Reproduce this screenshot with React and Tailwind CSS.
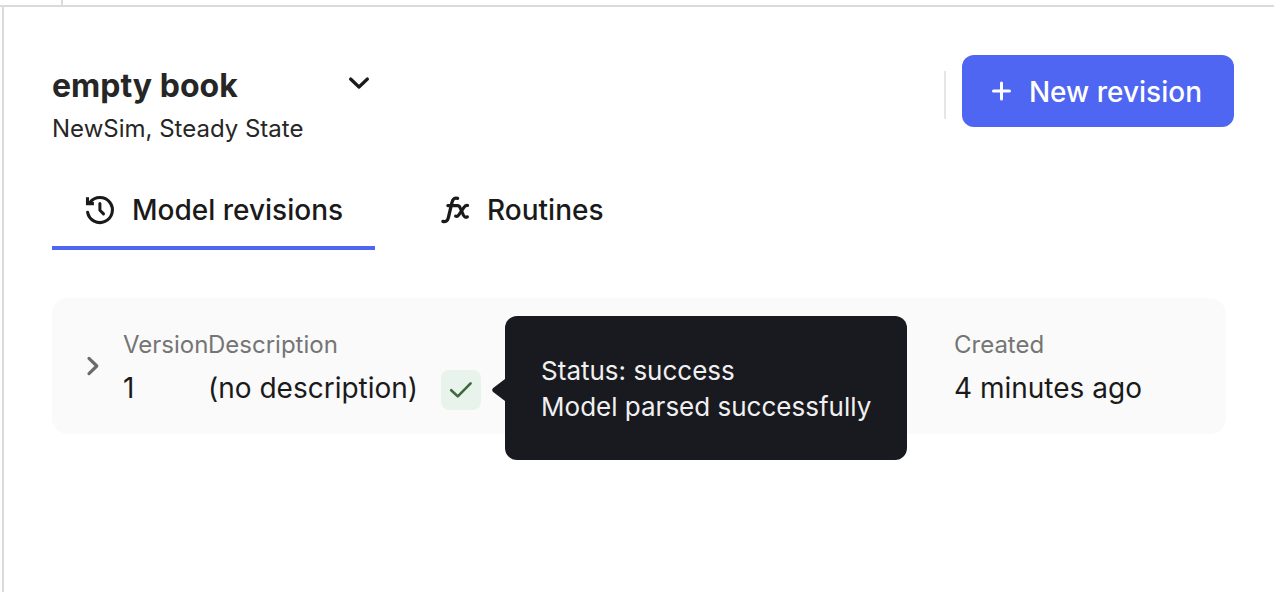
import React from "react";

const stroke = {
  fill: "none",
  stroke: "currentColor",
  strokeLinecap: "round",
  strokeLinejoin: "round",
  "aria-hidden": true,
};

function HistoryIcon() {
  return (
    <svg viewBox="0 0 32 32" className="size-8 shrink-0" {...stroke}>
      <path d="M3.6 18.2A12.5 12.5 0 1 0 6 8.4" strokeWidth="3.1" />
      <path d="M3.5 3.2V9.6H9.9" strokeWidth="3.1" strokeLinecap="butt" strokeLinejoin="miter" />
      <path d="M15.9 9.5V16.3L19.5 19.9" strokeWidth="3" />
    </svg>
  );
}

function FunctionIcon() {
  return (
    <svg viewBox="0 0 32 32" className="size-8 shrink-0" {...stroke}>
      <path d="M3.9 27.4C6.3 28.2 8.5 27 9.3 23.8L13 8.4C13.8 5 15.6 3.4 18.6 4.3" strokeWidth="3.3" />
      <path d="M8.8 11.6H18.4C20 11.6 20.6 12.3 21.2 13.8L24.4 21.2C25.2 22.9 26.6 23.7 28.4 22.8" strokeWidth="3.1" />
      <path d="M28.6 11.5C27 10.9 25.8 12 24.6 13.8L20 20.6C18.9 22.2 17.9 22.8 16.6 22.2" strokeWidth="3.1" />
    </svg>
  );
}

function Field({ label, className = "", children }) {
  return (
    <div className={`flex flex-col gap-0.5 ${className}`}>
      <dt className="text-[24px] leading-[38px] text-[#757575]">{label}</dt>
      <dd className="flex h-11 items-end text-[28px] leading-11 text-[#1a1a1a]">{children}</dd>
    </div>
  );
}

function StatusBadge() {
  return (
    <span className="relative ml-[23px] block size-10 shrink-0">
      <button
        type="button"
        aria-label="Status"
        aria-describedby="status-tip"
        className="flex size-10 items-center justify-center rounded-lg bg-[#e8f3eb] text-[#3b6a3c]"
      >
        <svg viewBox="0 0 40 40" className="size-10" {...stroke}>
          <path d="M10.2 20.2L16.8 26.4L29.6 13.4" strokeWidth="2.6" />
        </svg>
      </button>
      <span
        id="status-tip"
        role="tooltip"
        className="absolute -top-[54px] left-16 z-10 flex flex-col rounded-xl bg-[#191a1f] px-9 pt-[37px] pb-[35px] text-[26px] leading-9 whitespace-nowrap text-[#f0f0f0]"
      >
        <svg
          viewBox="0 0 14 24"
          className="absolute top-[62px] -left-[13px] h-6 w-3.5 text-[#191a1f]"
          aria-hidden="true"
        >
          <path d="M14 .2L1.2 10Q-.8 12 1.2 14L14 23.8Z" fill="currentColor" />
        </svg>
        <span>Status: success</span>
        <span>Model parsed successfully</span>
      </span>
    </span>
  );
}

export default function App() {
  return (
    <div className="flex min-h-screen flex-col bg-white font-['Inter',sans-serif] text-[#1a1a1a]">
      <div className="flex h-[7px] border-b-2 border-[#dadada]">
        <div className="w-[63px] border-r-2 border-[#dadada]" />
      </div>
      <main className="ml-0.5 flex grow flex-col border-l-2 border-[#dadada] pt-12 pr-10 pl-12">
        <header className="flex items-start justify-between">
          <div className="w-[323px] pt-3">
            <button type="button" className="flex w-full items-start justify-between text-left">
              <h1 className="text-[32px] leading-[38px] font-bold text-[#262626]">empty book</h1>
              <svg viewBox="0 0 32 32" className="size-8" {...stroke}>
                <path d="M7.6 12L16 20L24.4 12" strokeWidth="3.2" />
              </svg>
            </button>
            <p className="text-[24px] leading-12 text-[#262626]">NewSim, Steady State</p>
          </div>
          <div className="flex items-start gap-4">
            <div className="mt-4 h-12 w-0.5 bg-[#e6e6e6]" />
            <button
              type="button"
              className="flex h-18 items-center gap-3 rounded-xl bg-[#4f66f2] pr-8 pl-[23px] text-[28px] leading-10 font-medium whitespace-nowrap text-white"
            >
              <svg viewBox="0 0 32 32" className="size-8" {...stroke}>
                <path d="M16.5 8V24M8.5 16H24.5" strokeWidth="3" />
              </svg>
              <span className="pt-0.5">New revision</span>
            </button>
          </div>
        </header>

        <div role="tablist" className="mt-[21px] flex gap-8 text-[28px] leading-10 font-medium">
          <button
            type="button"
            role="tab"
            aria-selected="true"
            className="flex h-19 items-center gap-4 border-b-4 border-[#4f66f2] px-8"
          >
            <HistoryIcon />
            Model revisions
          </button>
          <button
            type="button"
            role="tab"
            aria-selected="false"
            className="flex h-19 items-center gap-4 border-b-4 border-transparent px-8"
          >
            <FunctionIcon />
            Routines
          </button>
        </div>

        <section className="mt-12 mr-2 flex items-start rounded-2xl bg-[#fafafa] pt-7 pb-6 pl-6">
          <button
            type="button"
            aria-label="Expand revision"
            className="flex h-20 w-[47px] shrink-0 items-center text-[#6b6b6b]"
          >
            <svg viewBox="0 0 32 32" className="size-8" {...stroke}>
              <path d="M13 8.4L20.8 16L13 23.6" strokeWidth="3.2" />
            </svg>
          </button>
          <dl className="flex grow">
            <Field label="Version" className="w-[85px]">1</Field>
            <Field label="Description" className="grow">
              (no description)
              <StatusBadge />
            </Field>
            <Field label="Created" className="w-[272px]">4 minutes ago</Field>
          </dl>
        </section>
      </main>
    </div>
  );
}
